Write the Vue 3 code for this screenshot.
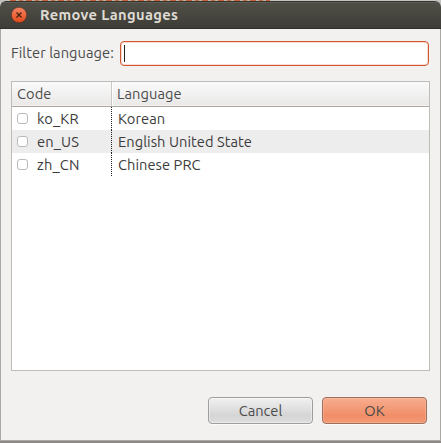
<script setup>
import { ref } from 'vue'

const filter = ref('')
const rows = ref([
  { code: 'ko_KR', language: 'Korean' },
  { code: 'en_US', language: 'English United State' },
  { code: 'zh_CN', language: 'Chinese PRC' },
])
</script>

<template>
  <div class="screen">
    <div class="backdrop"></div>
    <section class="dialog">
      <header class="titlebar">
        <svg class="close" viewBox="0 0 16 16">
          <defs>
            <linearGradient id="orange" x1="0" y1="0" x2="0" y2="1">
              <stop offset="0" stop-color="#f58563" />
              <stop offset="1" stop-color="#e2491b" />
            </linearGradient>
          </defs>
          <circle cx="8" cy="8" r="7.7" fill="url(#orange)" stroke="#45281e" stroke-width=".5" />
          <path d="M5.5 5.5 10.5 10.5M10.5 5.5 5.5 10.5" stroke="#43200f" stroke-width="1.25" />
        </svg>
        <h1>Remove Languages</h1>
      </header>
      <main>
        <div class="filter">
          <label>Filter language:</label>
          <div class="entry"><i class="caret"></i>{{ filter }}</div>
        </div>
        <div class="table">
          <div class="head">
            <div class="code">Code</div>
            <div class="name">Language</div>
          </div>
          <div v-for="row in rows" :key="row.code" class="row">
            <div class="code"><i class="check"></i><span>{{ row.code }}</span></div>
            <div class="name">{{ row.language }}</div>
          </div>
        </div>
        <footer>
          <button class="cancel">Cancel</button>
          <button class="ok">OK</button>
        </footer>
      </main>
    </section>
    <div class="shadow"></div>
  </div>
</template>

<style>
body { overflow: hidden; background: #c2c2c0; }
</style>

<style scoped>
* { box-sizing: border-box; }
.screen {
  width: 441px; height: 443px; display: flex; flex-direction: column;
  background: #c2c2c0; font: 14.667px/20px "Ubuntu", "Noto Sans", sans-serif; color: #3c3c3c;
  letter-spacing: .05px;
}
.backdrop {
  height: 1px; width: 260px; margin-left: 10px; flex: none;
  background: repeating-linear-gradient(90deg, #c9613e 0 6px, #b9b4ab 6px 9px, #c66c46 9px 13px, #b9b4ab 13px 16px);
}
.dialog {
  height: 440px; display: flex; flex-direction: column; flex: none;
  background: #f2f1f0; border-radius: 6px 6px 0 0; overflow: hidden;
}
.titlebar {
  height: 28px; flex: none; display: flex; align-items: center; padding-left: 11px;
  background: linear-gradient(#504f47, #3d3c37); border-top: 1px solid #35342f; border-bottom: 1px solid #302f2b;
  box-shadow: inset 0 1px #5d5c54;
}
.close { width: 16px; height: 16px; flex: none; }
h1 { margin: 0 0 0 13px; font-size: 14.667px; line-height: 20px; font-weight: 700; color: #dfdbd2; letter-spacing: .36px; }
main {
  flex: 1; display: flex; flex-direction: column; padding: 11px 10px 0;
  border: solid #aaa8a3; border-width: 0 1px 1px;
}
.filter { display: flex; height: 26px; align-items: center; }
label { width: 109px; flex: none; white-space: nowrap; color: #4c4c4c; }
.entry {
  width: 309px; height: 25px; border: 1px solid #d1572f; border-radius: 4px; background: #fff;
  box-shadow: inset 0 0 0 1px #f8dcd2; display: flex; align-items: center; padding-left: 3px;
}
.caret { width: 1px; height: 17px; background: #222; }
.table { height: 290px; width: 419px; margin-top: 15px; border: 1px solid #bebcb8; background: #fff; flex: none; }
.head, .row { display: flex; }
.head {
  height: 25px; background: linear-gradient(#fafafa, #e9e8e7);
  border-bottom: 1px solid #aaa7a2; box-shadow: inset 0 -1px #f4f3f2; color: #4c4c4c;
}
.code { width: 100px; flex: none; display: flex; align-items: center; padding-left: 5px; }
.name { flex: 1; display: flex; align-items: center; padding-left: 6px; }
.head .code { width: 99px; }
.head .name { border-left: 1px solid #cbc9c6; box-shadow: inset 1px 0 #fff; padding-left: 5px; }
.row { height: 23px; }
.row:nth-child(odd) { background: #ededed; }
.row .code {
  width: 100px;
  background: repeating-linear-gradient(#222 0 1px, transparent 1px 2px) right / 1px 100% no-repeat;
}
.row .code span { letter-spacing: .15px; }
.check { width: 11px; height: 11px; border: 1px solid #bcbab7; border-radius: 3px; background: #fff; margin-right: 9px; }
footer { display: flex; justify-content: flex-end; gap: 9px; margin-top: 26px; padding-right: 3px; }
button {
  width: 105px; height: 27px; padding: 0; border: 1px solid #a09e9b; border-radius: 4px;
  font: inherit; color: #4c4c4c; background: linear-gradient(#f1f1f1, #d5d5d5 70%, #dedede);
  box-shadow: inset 0 0 0 1px #ffffff66, 0 1px #fafafa;
}
.ok { border-color: #9c6f5f; background: linear-gradient(#f9ad90, #f08e67 70%, #f29a76); box-shadow: inset 0 0 0 1px #ffc3ab66, 0 1px #fafafa; }
.shadow { height: 2px; background: #8d8986; }
</style>
